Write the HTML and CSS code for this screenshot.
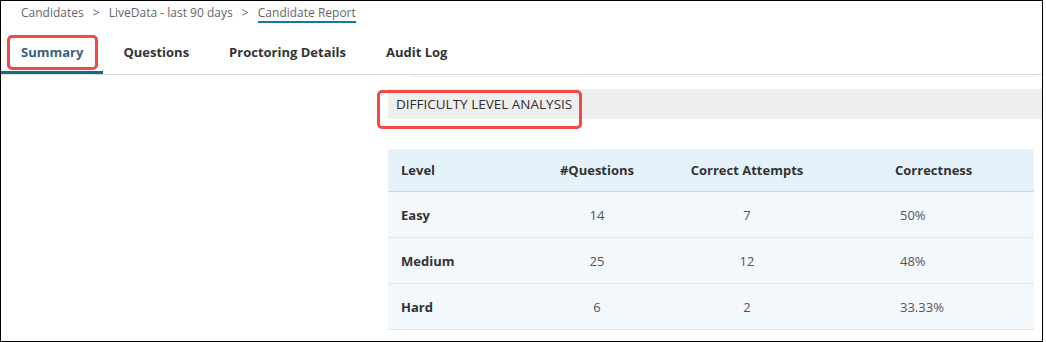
FILE: index.html
```html
<!DOCTYPE html>
<html>
<head>
	<title>Candidate Report</title>
	<link rel="stylesheet" href="styles.css">
</head>
<body>
	<div class="frame">
		<div class="crumbs">
			<span class="crumb">Candidates</span>
			<span class="sep">&gt;</span>
			<span class="crumb">LiveData - last 90 days</span>
			<span class="sep">&gt;</span>
			<span class="crumb current">Candidate Report</span>
		</div>

		<div class="tabs">
			<div class="tab active">Summary<span class="mark mark-tab"></span></div>
			<div class="tab">Questions</div>
			<div class="tab">Proctoring Details</div>
			<div class="tab">Audit Log</div>
		</div>

		<div class="main">
			<div class="side"></div>
			<div class="content">
				<div class="prev-row"></div>
				<div class="section-title">DIFFICULTY LEVEL ANALYSIS<span class="mark mark-title"></span></div>

				<table class="levels">
					<tr>
						<th class="c-level">Level</th>
						<th class="c-num">#Questions</th>
						<th class="c-num">Correct Attempts</th>
						<th class="c-pct">Correctness</th>
					</tr>
					<tr>
						<td class="c-level">Easy</td>
						<td class="c-num">14</td>
						<td class="c-num">7</td>
						<td class="c-pct">50%</td>
					</tr>
					<tr>
						<td class="c-level">Medium</td>
						<td class="c-num">25</td>
						<td class="c-num">12</td>
						<td class="c-pct">48%</td>
					</tr>
					<tr>
						<td class="c-level">Hard</td>
						<td class="c-num">6</td>
						<td class="c-num">2</td>
						<td class="c-pct">33.33%</td>
					</tr>
				</table>
			</div>
		</div>
	</div>
</body>
</html>
```

FILE: styles.css
```css
body {
    margin: 0;
    background: #fff;
    font-family: "Open Sans", "Liberation Sans", sans-serif;
    font-size: 13px;
    color: #333;
}

.frame {
    width: 1043px;
    height: 342px;
    box-sizing: border-box;
    border: 1px solid #000;
    overflow: hidden;
}

/* breadcrumb */
.crumbs {
    height: 24px;
    box-sizing: border-box;
    padding: 3px 0 0 20px;
    line-height: 18px;
    font-size: 12px;
    color: #666;
}
.crumbs .sep {
    margin: 0 6px;
    color: #666;
}
.crumb.current {
    border-bottom: 2px solid #1677a0;
    padding-bottom: 0;
}

/* tabs */
.tabs {
    display: flex;
    border-bottom: 1px solid #dcdcdc;
}
.tab {
    position: relative;
    padding: 18px 20px 10px;
    line-height: 18px;
    font-weight: bold;
    color: #333;
    border-bottom: 3px solid transparent;
}
.tab.active {
    color: #3a5e80;
    border-bottom-color: #0e6f82;
}

.mark {
    position: absolute;
    border: 3px solid #f24848;
    border-radius: 5px;
    box-sizing: border-box;
}
.mark-tab {
    left: 6px;
    top: 10px;
    width: 91px;
    height: 35px;
}

/* main area */
.main {
    display: flex;
}
.side {
    width: 387px;
    flex: none;
}
.content {
    flex: 1;
}

.prev-row {
    height: 1px;
    margin: 1px 8px 0 25px;
    background: #e6f0f6;
}

.section-title {
    position: relative;
    margin-top: 12px;
    height: 30px;
    line-height: 30px;
    padding-left: 8px;
    background: #eeeeee;
    color: #2f2f2f;
    font-size: 13.5px;
}
.mark-title {
    left: -11px;
    top: 1px;
    width: 205px;
    height: 39px;
}

/* table */
table.levels {
    margin-top: 30px;
    width: 646px;
    border-collapse: collapse;
}
table.levels th {
    height: 42px;
    padding: 0;
    background: #e6f2fa;
    border-bottom: 1px solid #c0dde8;
    font-weight: bold;
    color: #333;
}
table.levels td {
    height: 45px;
    padding: 0;
    background: #f3f8fc;
    border-bottom: 1px solid #d9eaf3;
    color: #555;
}
.c-level {
    width: 121px;
    padding-left: 13px !important;
    text-align: left;
}
table.levels td.c-level {
    font-weight: bold;
    color: #333;
}
.c-num {
    width: 150px;
    text-align: center;
}
.c-pct {
    text-align: left;
    padding-left: 73px !important;
}
table.levels td.c-pct {
    padding-left: 78px !important;
}
```
